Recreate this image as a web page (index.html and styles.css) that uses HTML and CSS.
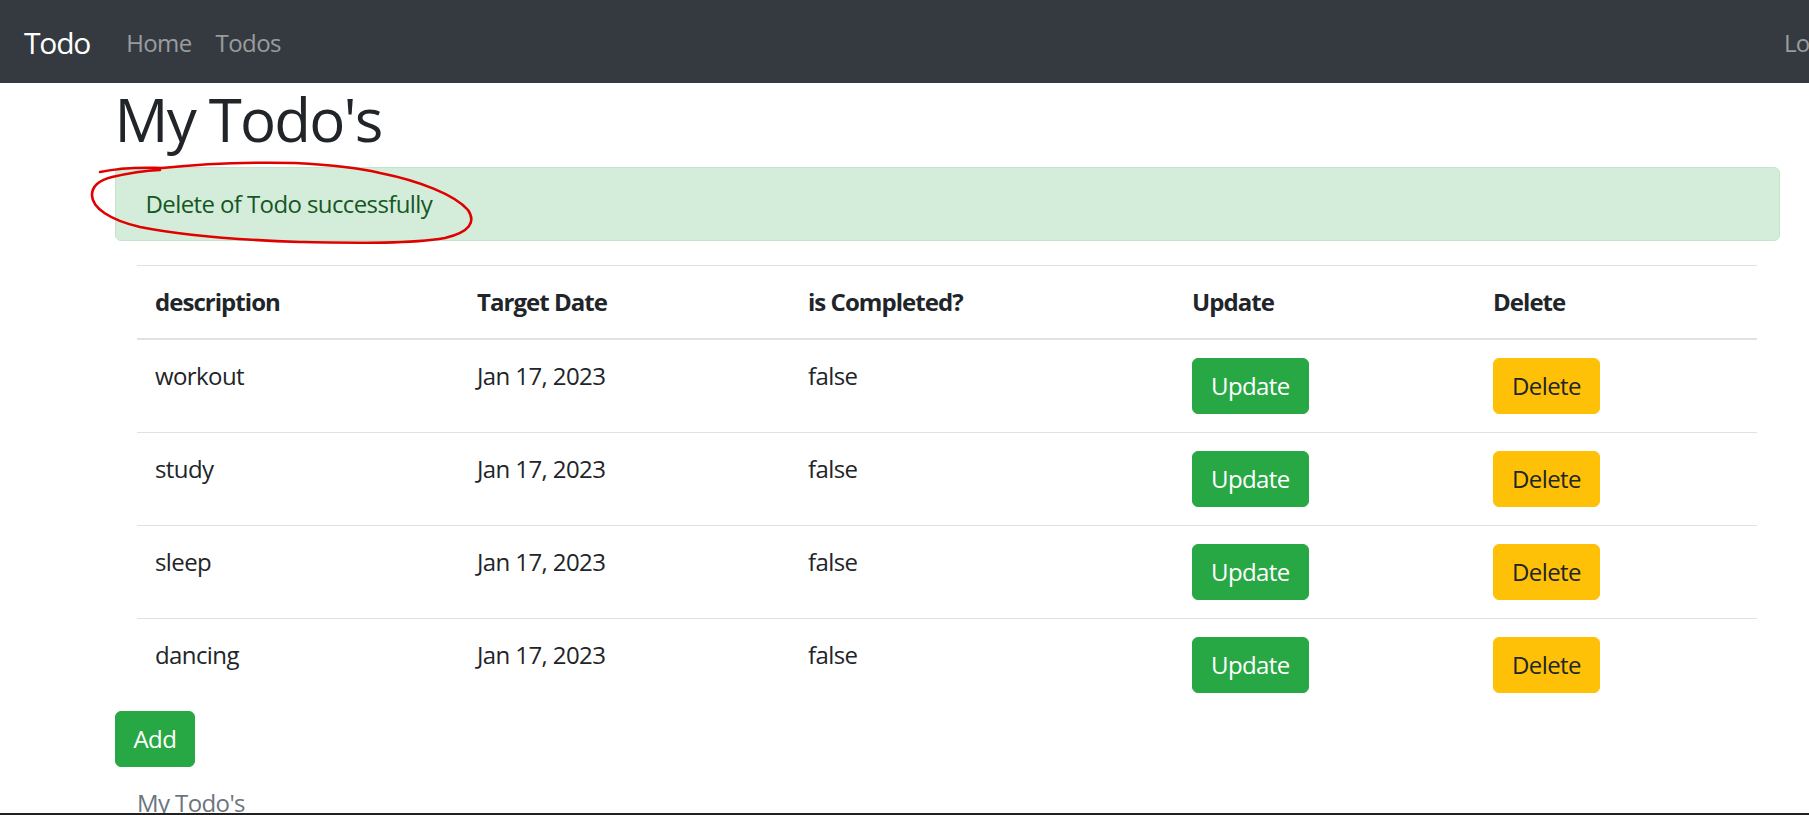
FILE: index.html
```html
<!DOCTYPE html>
<html lang="en">

<head>
    <meta charset="UTF-8">
    <meta name="viewport" content="width=device-width, initial-scale=1.0">
    <title>My Todo's</title>
    <link rel="stylesheet" href="styles.css">
</head>

<body>
    <div class="page">
        <nav class="navbar">
            <a class="brand" href="#">Todo</a>
            <a class="nav-link" href="#">Home</a>
            <a class="nav-link" href="#">Todos</a>
            <a class="nav-link logout" href="#">Logout</a>
        </nav>

        <div class="container">
            <h1>My Todo's</h1>
            <div class="alert">Delete of Todo successfully</div>

            <div class="inner">
                <table class="table">
                    <thead>
                        <tr>
                            <th class="col-desc">description</th>
                            <th class="col-date">Target Date</th>
                            <th class="col-done">is Completed?</th>
                            <th class="col-upd">Update</th>
                            <th class="col-del">Delete</th>
                        </tr>
                    </thead>
                    <tbody>
                        <tr>
                            <td>workout</td>
                            <td>Jan 17, 2023</td>
                            <td>false</td>
                            <td><button class="btn btn-success">Update</button></td>
                            <td><button class="btn btn-warning">Delete</button></td>
                        </tr>
                        <tr>
                            <td>study</td>
                            <td>Jan 17, 2023</td>
                            <td>false</td>
                            <td><button class="btn btn-success">Update</button></td>
                            <td><button class="btn btn-warning">Delete</button></td>
                        </tr>
                        <tr>
                            <td>sleep</td>
                            <td>Jan 17, 2023</td>
                            <td>false</td>
                            <td><button class="btn btn-success">Update</button></td>
                            <td><button class="btn btn-warning">Delete</button></td>
                        </tr>
                        <tr>
                            <td>dancing</td>
                            <td>Jan 17, 2023</td>
                            <td>false</td>
                            <td><button class="btn btn-success">Update</button></td>
                            <td><button class="btn btn-warning">Delete</button></td>
                        </tr>
                    </tbody>
                </table>
            </div>

            <button class="btn btn-success">Add</button>

            <div class="footer">My Todo's</div>
        </div>

        <!-- red pen mark round the message -->
        <svg class="scribble" width="1894" height="815" viewBox="0 0 1894 815">
            <path d="M100 172 C 130 166, 150 168, 162 168 C 200 164, 250 162, 295 163 C 335 165, 360 168, 380 173
                     C 420 181, 455 195, 468 210 C 476 222, 470 232, 445 238 C 410 244, 360 243, 300 242
                     C 240 240, 185 236, 140 227 C 110 220, 92 208, 92 195 C 92 186, 100 180, 112 177
                     C 125 174, 140 171, 160 170"
                fill="none" stroke="#e00000" stroke-width="2.6" stroke-linecap="round" stroke-linejoin="round" />
        </svg>

        <div class="edge"></div>
    </div>
</body>

</html>
```

FILE: styles.css
```css
* {
    margin: 0;
    padding: 0;
    box-sizing: border-box;
}

html,
body {
    overflow: hidden;
    height: 815px;
}

body {
    font-family: "Open Sans", "Noto Sans", Arial, sans-serif;
    font-size: 24px;
    line-height: 1.5;
    letter-spacing: -0.025em;
    color: #212529;
    background: #fff;
}

.page {
    position: relative;
    width: 1894px;
    height: 815px;
}

/* navbar */
.navbar {
    display: flex;
    align-items: center;
    height: 83px;
    padding: 0 24px;
    background-color: #343a40;
}

.navbar a {
    text-decoration: none;
}

.brand {
    color: #fff;
    font-size: 30px;
    line-height: 45px;
    letter-spacing: -0.04em;
    margin-right: 24px;
    margin-top: 2px;
}

.nav-link {
    color: rgba(255, 255, 255, 0.5);
    padding: 0 12px;
    line-height: 36px;
    margin-top: 2px;
}

.nav-link.logout {
    margin-left: auto;
}

/* page */
.container {
    width: 1710px;
    margin: 0 auto;
    padding: 0 22.5px;
}

h1 {
    font-size: 60px;
    font-weight: 400;
    line-height: 72px;
    letter-spacing: -0.03em;
    margin-bottom: 12px;
}

.alert {
    background-color: #d4edda;
    border: 1px solid #c3e6cb;
    color: #155724;
    border-radius: 6px;
    padding: 18px 30px;
    margin-bottom: 24px;
}

.inner {
    padding: 0 22.5px;
}

.table {
    width: 100%;
    border-collapse: collapse;
    table-layout: fixed;
}

.table th,
.table td {
    text-align: left;
    vertical-align: top;
    padding: 18px;
    border-top: 1px solid #dee2e6;
}

.table thead th {
    border-bottom: 2px solid #dee2e6;
    font-weight: 700;
    letter-spacing: -0.04em;
}

.col-desc {
    width: 322px;
}

.col-date {
    width: 331px;
}

.col-done {
    width: 384px;
}

.col-upd {
    width: 301px;
}

.col-del {
    width: 282px;
}

.btn {
    font-family: inherit;
    font-size: 24px;
    line-height: 36px;
    letter-spacing: inherit;
    padding: 9px 18px;
    border: 1px solid transparent;
    border-radius: 6px;
    cursor: pointer;
}

.btn-success {
    background-color: #28a745;
    border-color: #28a745;
    color: #fff;
}

.btn-warning {
    background-color: #ffc107;
    border-color: #ffc107;
    color: #212529;
}

.footer {
    color: #6c757d;
    padding-left: 22.5px;
    margin-top: 18px;
}

.scribble {
    position: absolute;
    left: 0;
    top: 0;
    pointer-events: none;
}

.edge {
    position: absolute;
    left: 0;
    right: 0;
    bottom: 0;
    height: 2px;
    background: #222;
}
```
